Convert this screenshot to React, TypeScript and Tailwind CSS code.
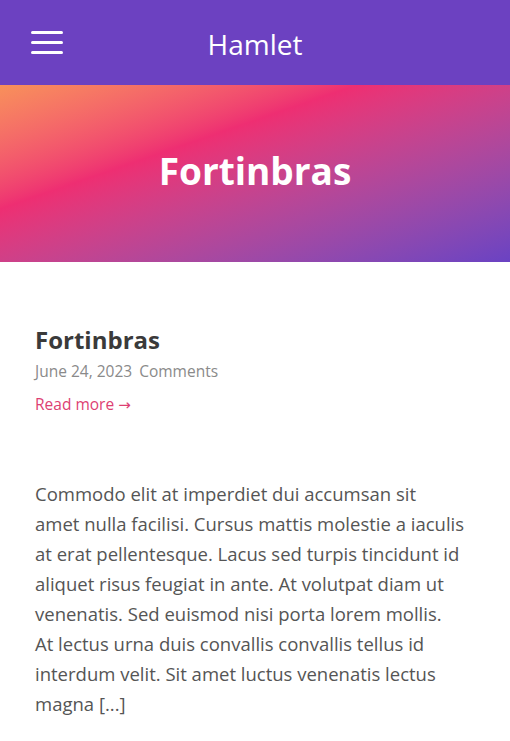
export default function App() {
  return (
    <div className="min-h-screen bg-white font-['Open_Sans',sans-serif]">
      <header className="flex h-[85px] items-center bg-[#6c41c1] px-[31px]">
        <button className="flex w-[32px] flex-col gap-[7px]" aria-label="Menu">
          <span className="h-[3px] w-full rounded-full bg-white" />
          <span className="h-[3px] w-full rounded-full bg-white" />
          <span className="h-[3px] w-full rounded-full bg-white" />
        </button>
        <h1 className="flex-1 pr-[32px] pt-[3px] text-center text-[28px] text-white">Hamlet</h1>
      </header>

      <section className="flex h-[177px] items-center justify-center bg-linear-to-br from-[#f8905a] via-[#ee2e72] via-35% to-[#6a42c3]">
        <h2 className="pb-[6px] text-[37px] font-bold text-white">Fortinbras</h2>
      </section>

      <main className="px-[35px] pt-[62px]">
        <article>
          <h3 className="text-[24px] font-bold leading-[32px] text-[#3a3a3a]">Fortinbras</h3>
          <div className="mt-[3px] text-[15.5px] leading-[24px] text-[#8a8a8a]">
            June 24, 2023 <span className="ml-[3px]">Comments</span>
          </div>
          <a href="#" className="mt-[9px] block text-[15.5px] leading-[24px] text-[#dd3f73]">
            Read more <span className="font-['DejaVu_Sans',sans-serif] text-[15px]">→</span>
          </a>
          <p className="mt-[62px] text-[18.5px] leading-[30px] text-[#555555]">
            Commodo elit at imperdiet dui accumsan sit
            <br />
            amet nulla facilisi. Cursus mattis molestie a iaculis
            <br />
            at erat pellentesque. Lacus sed turpis tincidunt id
            <br />
            aliquet risus feugiat in ante. At volutpat diam ut
            <br />
            venenatis. Sed euismod nisi porta lorem mollis.
            <br />
            At lectus urna duis convallis convallis tellus id
            <br />
            interdum velit. Sit amet luctus venenatis lectus
            <br />
            magna [...]
          </p>
        </article>
      </main>
    </div>
  );
}
